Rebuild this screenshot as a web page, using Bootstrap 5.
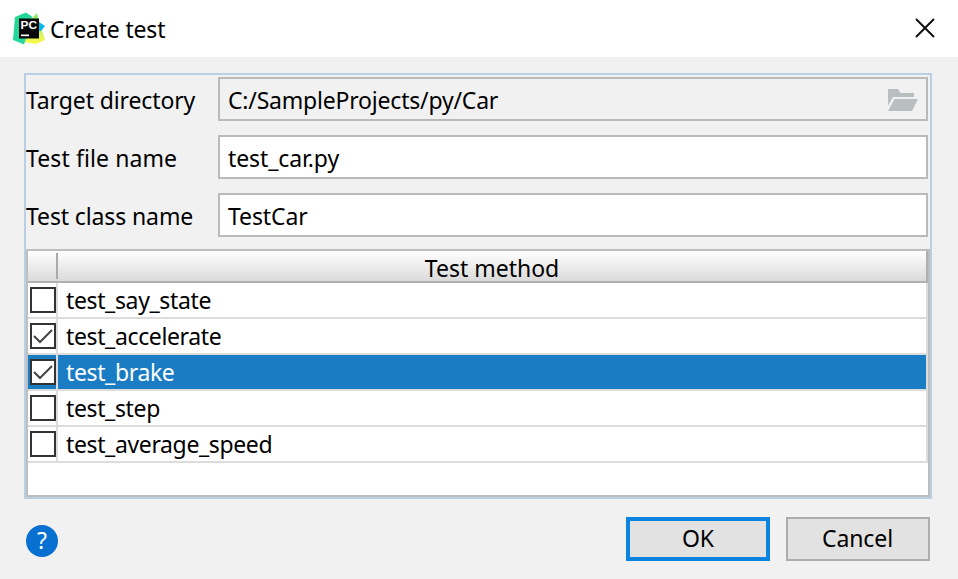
<!DOCTYPE html>
<html lang="en">
<head>
<meta charset="utf-8">
<meta name="viewport" content="width=device-width, initial-scale=1">
<title>Create test</title>
<link href="https://cdn.jsdelivr.net/npm/bootstrap@5.3.0/dist/css/bootstrap.min.css" rel="stylesheet">
<style>
body{background:#f1f1f1;color:#000;font-family:"Noto Sans","Open Sans",sans-serif;font-size:23px;line-height:30px;height:579px;overflow:hidden}
.title-bar{height:57px;padding:0 22px 0 13px}
.title-text{margin-left:5px;letter-spacing:-.18px}
.title-bar .close-icon{margin-top:-1px}
.panel{margin:16px 26px 0 24px;height:426px;border:2px solid #b8cfe5;padding-top:2px}
.fields{padding-right:2px;gap:14px}
.field-label{width:192px;padding-top:1px;letter-spacing:-.12px}
.field-label.loose{letter-spacing:.1px}
.form-control.field{height:44px;border:2px solid #bababa;border-radius:0;font-size:inherit;line-height:30px;color:#000;padding:6px 8px 4px;letter-spacing:-.1px}
.form-control.field.locked{background:#f1f1f1;letter-spacing:-.2px}
.folder-icon{margin-top:3px}
.methods{margin-top:12px;height:248px;border:2px solid #bebebe}
.methods-head{height:32px;border-bottom:2px solid #b0b0b0;background:linear-gradient(#fff,#dadada)}
.check-head{width:30px;border-right:2px solid #aaa;height:26px;margin-top:2px}
.method-head{border-right:2px solid #b0b0b0;height:30px;padding-top:2px}
.method-row{height:36px}
.check-cell{width:30px;border-right:2px solid #dcdcdc;border-bottom:2px solid #dcdcdc;padding:4px 0 0 2px}
.name-cell{border-right:2px solid #dcdcdc;border-bottom:2px solid #dcdcdc;padding:2px 8px 0;letter-spacing:-.37px}
.box{width:26px;height:26px;border:2px solid #333;background:#fff}
.chosen .check-cell,.chosen .name-cell{background:#1a7dc4;background-clip:padding-box;color:#fff}
.footer{padding:18px 28px 0 26px;gap:16px}
.btn.dialog-btn{width:144px;height:44px;border:2px solid #adadad;border-radius:0;background:#e2e2e2;color:#000;font-size:inherit;line-height:30px;padding:4px 1px 6px 0;letter-spacing:-.1px}
.btn.dialog-btn.default-btn{border:4px solid #0a84de;padding:2px 0 4px}
.help-btn{width:32px;height:32px;border-radius:50%;background:#0870d0;color:#fff;line-height:31px;margin-top:4px}
svg{display:block;flex:none}
</style>
<script src="https://cdn.jsdelivr.net/npm/bootstrap@5.3.0/dist/js/bootstrap.bundle.min.js"></script>
</head>
<body>
<header class="title-bar d-flex align-items-center bg-white">
  <svg width="32" height="33" viewBox="0 0 32 33">
    <defs>
      <linearGradient id="g1" x1="0" y1="0" x2="1" y2="1"><stop offset="0" stop-color="#21d789"/><stop offset="1" stop-color="#2ad7b0"/></linearGradient>
      <linearGradient id="g2" x1="0" y1="0" x2="0" y2="1"><stop offset="0" stop-color="#86e873"/><stop offset=".5" stop-color="#c3f060"/><stop offset="1" stop-color="#fcf84a"/></linearGradient>
    </defs>
    <path d="M18 7l6-6 2 8 6 19-9 4-12-2z" fill="url(#g2)"/>
    <path d="M2 5L13 .5l6 4-3 12-4 13-1 3L0 28z" fill="url(#g1)"/>
    <path d="M26 10l6 4-4 5h-2z" fill="#07b8e8"/>
    <path d="M6 6.500h20v20H6z" fill="#080808"/>
    <text x="7.500" y="16.500" font-family="Liberation Sans, sans-serif" font-size="11.500" font-weight="700" fill="#fff" textLength="16.500" lengthAdjust="spacingAndGlyphs">PC</text>
    <path d="M8 22.500h8v1.700H8z" fill="#fff"/>
  </svg>
  <div class="title-text flex-grow-1">Create test</div>
  <svg class="close-icon" width="22" height="22" viewBox="0 0 22 22" role="img" aria-label="Close"><path d="M2 2l18 18M20 2L2 20" stroke="#111" stroke-width="2" fill="none"/></svg>
</header>

<main class="panel">
  <div class="fields d-flex flex-column">
    <div class="d-flex align-items-center">
      <div class="field-label flex-shrink-0">Target directory</div>
      <div class="form-control field locked d-flex justify-content-between"><span>C:/SampleProjects/py/Car</span>
        <svg class="folder-icon" width="30" height="24" viewBox="0 0 30 24"><path d="M0 1h10l2.500 4H26v4H5L0 18z" fill="#b9bec1"/><path d="M6.500 11H30l-6 12H0z" fill="#b9bec1"/></svg>
      </div>
    </div>
    <div class="d-flex align-items-center">
      <div class="field-label loose flex-shrink-0">Test file name</div>
      <div class="form-control field">test_car.py</div>
    </div>
    <div class="d-flex align-items-center">
      <div class="field-label flex-shrink-0">Test class name</div>
      <div class="form-control field">TestCar</div>
    </div>
  </div>

  <section class="methods bg-white">
    <div class="methods-head d-flex">
      <div class="check-head flex-shrink-0"></div>
      <div class="method-head flex-grow-1 text-center">Test method</div>
    </div>
    <div class="method-row d-flex">
      <div class="check-cell flex-shrink-0"><div class="box"></div></div>
      <div class="name-cell flex-grow-1">test_say_state</div>
    </div>
    <div class="method-row d-flex">
      <div class="check-cell flex-shrink-0"><div class="box"><svg width="22" height="22" viewBox="0 0 22 22"><path d="M2 11l6 6L20 5" fill="none" stroke="#444" stroke-width="2"/></svg></div></div>
      <div class="name-cell flex-grow-1">test_accelerate</div>
    </div>
    <div class="method-row chosen d-flex">
      <div class="check-cell flex-shrink-0"><div class="box"><svg width="22" height="22" viewBox="0 0 22 22"><path d="M2 11l6 6L20 5" fill="none" stroke="#444" stroke-width="2"/></svg></div></div>
      <div class="name-cell flex-grow-1">test_brake</div>
    </div>
    <div class="method-row d-flex">
      <div class="check-cell flex-shrink-0"><div class="box"></div></div>
      <div class="name-cell flex-grow-1">test_step</div>
    </div>
    <div class="method-row d-flex">
      <div class="check-cell flex-shrink-0"><div class="box"></div></div>
      <div class="name-cell flex-grow-1">test_average_speed</div>
    </div>
  </section>
</main>

<footer class="footer d-flex align-items-center">
  <div class="help-btn text-center me-auto">?</div>
  <button type="button" class="btn dialog-btn default-btn">OK</button>
  <button type="button" class="btn dialog-btn">Cancel</button>
</footer>
</body>
</html>
